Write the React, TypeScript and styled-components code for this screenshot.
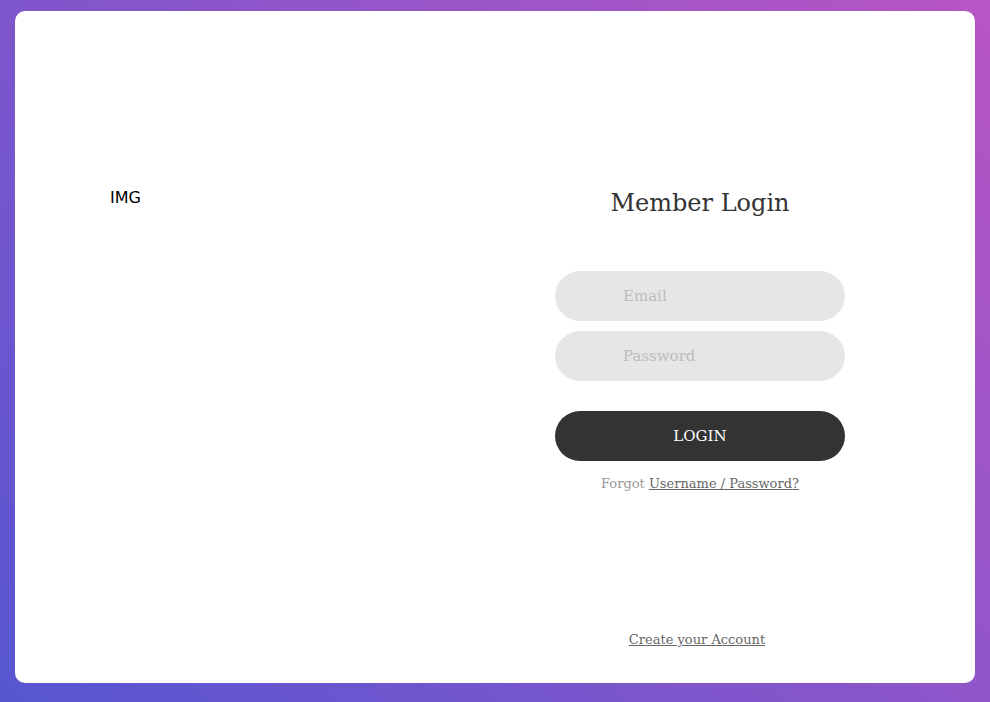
import React from "react";
import styled, { createGlobalStyle } from "styled-components";

const GlobalStyle = createGlobalStyle`
  * { box-sizing: border-box; }
  html, body { margin: 0; padding: 0; }
  body { font-family: "DejaVu Serif", serif; }
`;

const Page = styled.div`
  width: 100%;
  min-height: 100vh;
  display: flex;
  justify-content: center;
  align-items: flex-start;
  padding: 11px 15px;
  background: linear-gradient(-135deg, #b855c4, #5656d1);
`;

const Card = styled.div`
  width: 960px;
  min-height: 672px;
  background: #fff;
  border-radius: 10px;
  overflow: hidden;
  display: flex;
  justify-content: space-between;
  align-items: flex-start;
  padding: 177px 130px 33px 95px;
`;

const Pic = styled.div`
  width: 316px;
  font-family: "DejaVu Sans", sans-serif;
  font-size: 16px;
  line-height: 19px;
  color: #000;
`;

const Form = styled.form`
  width: 290px;
  display: flex;
  flex-direction: column;
`;

const Title = styled.span`
  display: block;
  font-family: "DejaVu Serif", serif;
  font-size: 24px;
  line-height: 1.2;
  color: #333;
  text-align: center;
  padding: 1px 0 53px;
`;

const InputWrap = styled.div`
  margin-bottom: 10px;
`;

const Input = styled.input`
  display: block;
  width: 100%;
  height: 50px;
  border: none;
  outline: none;
  border-radius: 25px;
  background: #e6e6e6;
  padding: 0 30px 0 68px;
  font-family: "DejaVu Serif", serif;
  font-size: 15px;
  line-height: 1.5;
  color: #666;
  &::placeholder {
    color: #bdbdbd;
  }
`;

const BtnRow = styled.div`
  padding-top: 20px;
  display: flex;
  justify-content: center;
`;

const Button = styled.button`
  width: 100%;
  height: 50px;
  border: none;
  border-radius: 25px;
  background: #333;
  color: #fff;
  font-family: "DejaVu Serif", serif;
  font-size: 15px;
  line-height: 1.5;
  text-transform: uppercase;
  padding: 0 25px;
  cursor: pointer;
`;

const TextRow = styled.div<{ $pt: number; $pr?: number }>`
  padding-top: ${(p) => p.$pt}px;
  padding-right: ${(p) => p.$pr ?? 0}px;
  text-align: center;
  font-family: "DejaVu Serif", serif;
  font-size: 13px;
  line-height: 1.5;
`;

const Muted = styled.span`
  color: #999;
`;

const Link = styled.a`
  color: #666;
  text-decoration: underline;
`;

export default function App() {
  return (
    <>
      <GlobalStyle />
      <Page>
        <Card>
          <Pic>IMG</Pic>
          <Form onSubmit={(e) => e.preventDefault()}>
            <Title>Member Login</Title>
            <InputWrap>
              <Input type="text" name="email" placeholder="Email" />
            </InputWrap>
            <InputWrap>
              <Input type="password" name="pass" placeholder="Password" />
            </InputWrap>
            <BtnRow>
              <Button type="button">Login</Button>
            </BtnRow>
            <TextRow $pt={13}>
              <Muted>Forgot</Muted> <Link href="#">Username / Password?</Link>
            </TextRow>
            <TextRow $pt={137} $pr={6}>
              <Link href="#">Create your Account</Link>
            </TextRow>
          </Form>
        </Card>
      </Page>
    </>
  );
}
